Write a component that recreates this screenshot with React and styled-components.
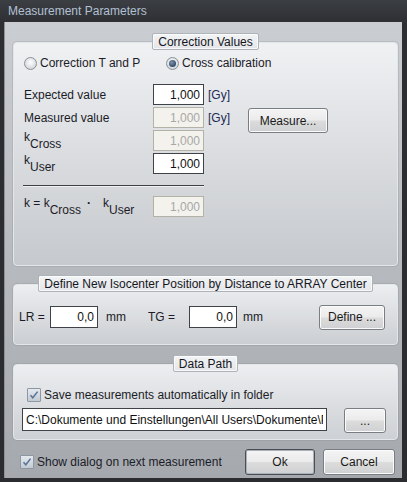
import styled, { createGlobalStyle } from "styled-components";

const GlobalStyle = createGlobalStyle`
  html, body { margin: 0; padding: 0; }
  body {
    font-family: "Liberation Sans", Arial, sans-serif;
    font-size: 12px;
    color: #1c1c28;
  }
`;

const Window = styled.div`
  width: 407px;
  height: 482px;
  box-sizing: border-box;
  padding: 0 5px 4px 4px;
  display: flex;
  flex-direction: column;
  background: linear-gradient(#3b3e43, #2c2e32 24px, #2a2c30);
`;

const TitleBar = styled.div`
  height: 22px;
  flex-shrink: 0;
  display: flex;
  align-items: center;
  padding-left: 4px;
  color: #b3c0d3;
  font-size: 12px;
`;

const Client = styled.div`
  flex: 1;
  display: flex;
  flex-direction: column;
  padding: 11px 4px 0 9px;
  background: linear-gradient(#caced3, #a5a9ae);
  box-shadow: inset 1px 0 0 #8e9297;
`;

const Group = styled.div`
  display: flex;
  flex-direction: column;
  align-items: center;
  margin-bottom: ${(p) => p.$after || 0}px;
`;

const Tab = styled.div`
  position: relative;
  z-index: 1;
  height: 17px;
  box-sizing: border-box;
  padding: 0 5px;
  display: flex;
  align-items: center;
  margin-bottom: -8px;
  border: 1px solid #aeb3ba;
  border-radius: 2px;
  background: linear-gradient(#f3f4f5, #e3e5e8);
  box-shadow: inset 0 0 0 1px rgba(255, 255, 255, 0.7);
  color: #16161e;
`;

const Box = styled.div`
  align-self: stretch;
  height: ${(p) => p.$h}px;
  box-sizing: border-box;
  border: 1px solid #e4e7ea;
  border-radius: 4px;
  background: linear-gradient(${(p) => p.$top}, ${(p) => p.$bottom});
  box-shadow: 0 0 0 1px rgba(110, 115, 122, 0.18);
  padding: ${(p) => p.$pad};
  display: flex;
  flex-direction: column;
`;

const RadioRow = styled.div`
  display: flex;
  align-items: center;
  height: 14px;
`;

const RadioItem = styled.label`
  display: flex;
  align-items: center;
  gap: 3px;
  width: ${(p) => (p.$w ? `${p.$w}px` : "auto")};
`;

const RadioCircle = styled.span`
  width: 13px;
  height: 13px;
  box-sizing: border-box;
  border-radius: 50%;
  border: 1px solid #8c9198;
  background: radial-gradient(circle at 50% 40%, #ffffff, #d3d6da 75%);
  display: flex;
  align-items: center;
  justify-content: center;

  &::after {
    content: "";
    display: ${(p) => (p.$on ? "block" : "none")};
    width: 7px;
    height: 7px;
    border-radius: 50%;
    background: radial-gradient(circle at 40% 35%, #7d93ad, #354c68 70%);
  }
`;

const Form = styled.div`
  display: flex;
  margin-top: 14px;
`;

const Grid = styled.div`
  display: grid;
  grid-template-columns: 125px 51px auto;
  grid-template-rows: repeat(4, 21px) 18px 21px;
  row-gap: 2px;
  column-gap: 4px;
  align-items: center;
`;

const Label = styled.span`
  white-space: nowrap;
`;

const Sub = styled.span`
  vertical-align: -7px;
`;

const Dot = styled.span`
  margin: 0 12px 0 6px;
  font-weight: bold;
`;

const Field = styled.input`
  width: ${(p) => p.$w || 51}px;
  height: ${(p) => p.$h || 21}px;
  box-sizing: border-box;
  margin: 0;
  padding: 0 3px;
  font: 12px "Liberation Sans", Arial, sans-serif;
  text-align: ${(p) => p.$align || "right"};
  color: #111;
  background: #fff;
  border: 1px solid #3f4246;
  outline: none;

  &:disabled {
    background: #f3f2ed;
    border-color: #b4b1a6;
    color: #a8a8a8;
  }
`;

const Unit = styled.span`
  color: #1d2a55;
`;

const Divider = styled.div`
  grid-column: 1 / 3;
  height: 1px;
  margin-left: -1px;
  background: #3d3f42;
  box-shadow: 0 1px 0 rgba(255, 255, 255, 0.6);
  align-self: start;
  margin-top: 9px;
`;

const Button = styled.button`
  width: ${(p) => p.$w}px;
  height: ${(p) => p.$h || 25}px;
  margin: 0;
  padding: 0;
  font: 12px "Liberation Sans", Arial, sans-serif;
  color: #1a1a1a;
  border: 1px solid ${(p) => (p.$default ? "#4b4f55" : "#7a7d82")};
  border-radius: 3px;
  background: linear-gradient(#f4f4f4, #ebebeb 48%, #dcdcdc 52%, #cfd0d2);
  box-shadow: inset 0 0 0 1px ${(p) => (p.$default ? "#a9b0b8" : "#fbfbfb")};
`;

const MeasureCol = styled.div`
  margin: 24px 0 0 18px;
`;

const IsoRow = styled.div`
  display: flex;
  align-items: center;
  padding: 5px 12px 0 5px;
  height: 100%;
  box-sizing: border-box;
`;

const IsoLabel = styled.span`
  width: ${(p) => p.$w}px;
`;

const Mm = styled.span`
  width: ${(p) => p.$w}px;
  margin-left: ${(p) => p.$ml}px;
`;

const CheckRow = styled.label`
  display: flex;
  align-items: center;
  gap: 3px;
  margin-left: ${(p) => p.$ml || 0}px;
`;

const CheckBoxShape = styled.span`
  width: 14px;
  height: 14px;
  box-sizing: border-box;
  border: 1px solid #8e98a4;
  border-radius: 1px;
  background: linear-gradient(#e4e9ef, #c2cad3);
  display: flex;
  align-items: center;
  justify-content: center;
`;

const PathRow = styled.div`
  display: flex;
  align-items: flex-start;
  margin-top: 6px;
  padding-left: 8px;
`;

const Footer = styled.div`
  display: flex;
  align-items: center;
  margin-top: 9px;
  padding-right: 3px;
`;

const Buttons = styled.div`
  margin-left: auto;
  display: flex;
  gap: 8px;
`;

function Radio({ on, label, w }) {
  return (
    <RadioItem $w={w}>
      <RadioCircle $on={on} />
      {label}
    </RadioItem>
  );
}

function Check({ label, ml }) {
  return (
    <CheckRow $ml={ml}>
      <CheckBoxShape>
        <svg width="10" height="10" viewBox="0 0 10 10">
          <path d="M1.5 5.2 L3.8 7.8 L8.6 1.6" fill="none" stroke="#5a7396" strokeWidth="1.5" />
        </svg>
      </CheckBoxShape>
      {label}
    </CheckRow>
  );
}

export default function App() {
  return (
    <>
      <GlobalStyle />
      <Window>
        <TitleBar>Measurement Parameters</TitleBar>
        <Client>
          <Group $after={9}>
            <Tab>Correction Values</Tab>
            <Box $h={224} $top="#eff1f3" $bottom="#c6c9cd" $pad="13px 0 0 10px">
              <RadioRow>
                <Radio label="Correction T and P" w={142} />
                <Radio on label="Cross calibration" />
              </RadioRow>
              <Form>
                <Grid>
                  <Label>Expected value</Label>
                  <Field defaultValue="1,000" />
                  <Unit>[Gy]</Unit>
                  <Label>Measured value</Label>
                  <Field disabled defaultValue="1,000" />
                  <Unit>[Gy]</Unit>
                  <Label>
                    k<Sub>Cross</Sub>
                  </Label>
                  <Field disabled defaultValue="1,000" />
                  <span />
                  <Label>
                    k<Sub>User</Sub>
                  </Label>
                  <Field defaultValue="1,000" />
                  <span />
                  <Divider />
                  <span />
                  <Label>
                    k = k<Sub>Cross</Sub>
                    <Dot>·</Dot>k<Sub>User</Sub>
                  </Label>
                  <Field disabled defaultValue="1,000" />
                </Grid>
                <MeasureCol>
                  <Button $w={80}>Measure...</Button>
                </MeasureCol>
              </Form>
            </Box>
          </Group>

          <Group $after={10}>
            <Tab>Define New Isocenter Position by Distance to ARRAY Center</Tab>
            <Box $h={61} $top="#eceef0" $bottom="#cbced2" $pad="0">
              <IsoRow>
                <IsoLabel $w={31}>LR =</IsoLabel>
                <Field $w={48} $h={22} defaultValue="0,0" />
                <Mm $w={42} $ml={8}>mm</Mm>
                <IsoLabel $w={41}>TG =</IsoLabel>
                <Field $w={48} $h={22} defaultValue="0,0" />
                <Mm $w={30} $ml={6}>mm</Mm>
                <Buttons>
                  <Button $w={66}>Define ...</Button>
                </Buttons>
              </IsoRow>
            </Box>
          </Group>

          <Group>
            <Tab>Data Path</Tab>
            <Box $h={76} $top="#eceef0" $bottom="#cdd0d4" $pad="23px 11px 0 0">
              <Check ml={13} label="Save measurements automatically in folder" />
              <PathRow>
                <Field
                  $w={305}
                  $h={23}
                  $align="left"
                  defaultValue="C:\Dokumente und Einstellungen\All Users\Dokumente\PTW"
                />
                <Buttons>
                  <Button $w={42}>...</Button>
                </Buttons>
              </PathRow>
            </Box>
          </Group>

          <Footer>
            <Check ml={7} label="Show dialog on next measurement" />
            <Buttons>
              <Button $w={70} $h={26} $default>
                Ok
              </Button>
              <Button $w={72} $h={26}>
                Cancel
              </Button>
            </Buttons>
          </Footer>
        </Client>
      </Window>
    </>
  );
}
